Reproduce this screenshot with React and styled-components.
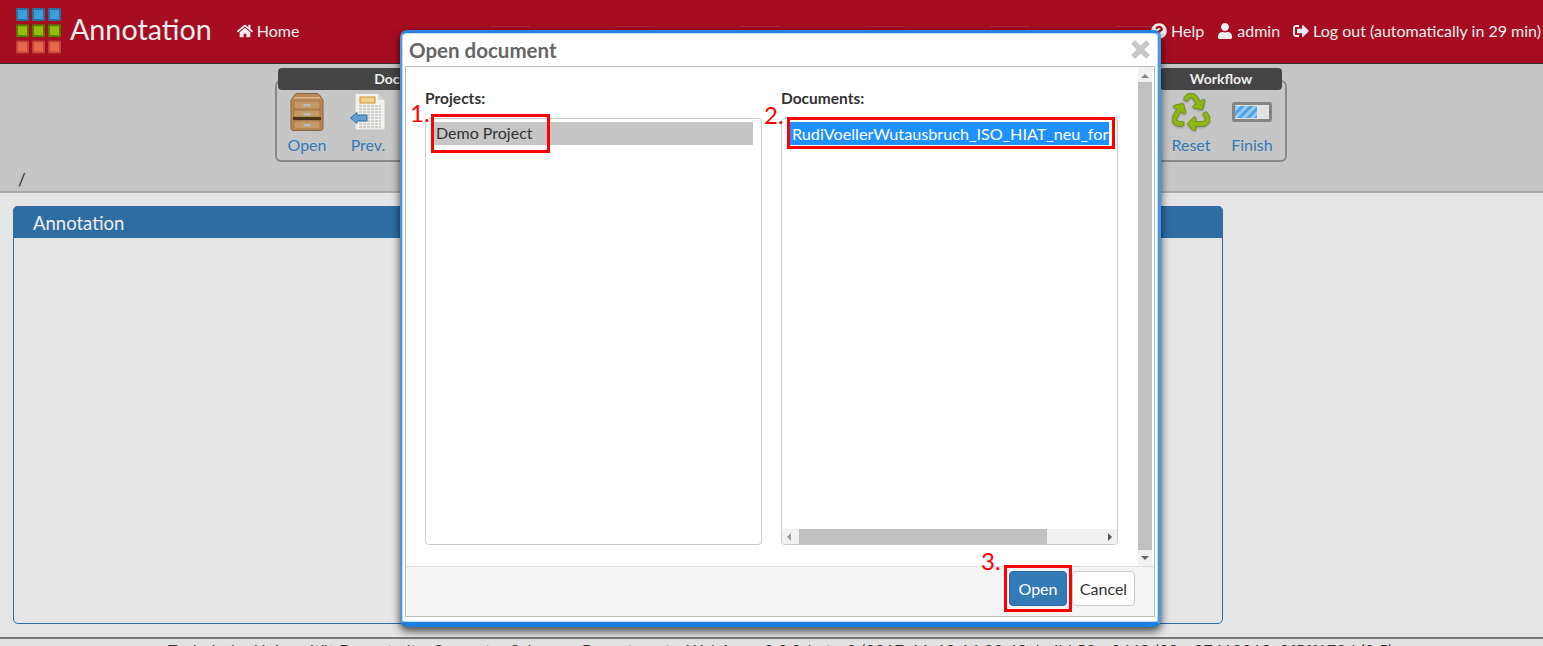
import styled, { createGlobalStyle } from 'styled-components';
import { FaHome, FaQuestionCircle, FaUser, FaSignOutAlt, FaRecycle } from 'react-icons/fa';

const GlobalStyle = createGlobalStyle`
  html, body {
    margin: 0;
    height: 646px;
    overflow: hidden;
    background: #e5e5e5;
    font-family: Lato, "Open Sans", sans-serif;
    color: #333;
  }
  * { box-sizing: border-box; }
`;

const Page = styled.div`
  display: flex;
  flex-direction: column;
  height: 646px;
  overflow: hidden;
  position: relative;
`;

const Header = styled.header`
  position: relative;
  flex: 0 0 64px;
  display: flex;
  align-items: center;
  padding: 0 0 2px 15px;
  background: #a60d20;
  border-bottom: 1px solid #333;
  color: #eee;
  white-space: nowrap;

  &::after {
    content: '';
    position: absolute;
    left: 490px;
    top: 26px;
    width: 665px;
    height: 1px;
    background: repeating-linear-gradient(
      90deg,
      rgba(255, 255, 255, 0.12) 0 40px,
      transparent 40px 125px
    );
  }
`;

const Title = styled.h1`
  margin: 0 25px 4px 9px;
  font-size: 28.7px;
  font-weight: 400;
  color: #eee;
`;

const NavLink = styled.span`
  display: inline-flex;
  align-items: center;
  gap: 4px;
  font-size: 16px;
  margin-right: ${(p) => p.$gap || 0}px;
  svg { font-size: 16px; }
`;

const RightNav = styled.nav`
  margin-left: auto;
  margin-right: 2px;
  display: flex;
`;

const Toolbar = styled.section`
  flex: 0 0 129px;
  background: #c6c6c6;
  border-bottom: 2px solid #aaa;
  display: flex;
  flex-direction: column;
`;

const Ribbon = styled.div`
  display: flex;
  justify-content: space-between;
  width: 1012px;
  margin: 4px 0 0 275px;
`;

const Group = styled.div`
  display: flex;
  flex-direction: column;
  width: ${(p) => p.$width}px;
`;

const GroupLabel = styled.div`
  position: relative;
  height: 22px;
  margin: 0 5px -10px 3px;
  background: #444;
  border-radius: 4px;
  color: #eee;
  font-size: 14px;
  font-weight: 700;
  line-height: 22px;
  text-align: center;
`;

const GroupBody = styled.div`
  height: 82px;
  display: flex;
  padding: 10px 0 0 ${(p) => p.$pad}px;
  border: 2px solid #888;
  border-radius: 6px;
  gap: 3px;
`;

const ToolButton = styled.div`
  width: 58px;
  display: flex;
  flex-direction: column;
  align-items: center;
  color: #337ab7;
  font-size: 16px;
`;

const ToolIcon = styled.div`
  height: 40px;
  margin-bottom: 3px;
  display: flex;
  align-items: center;
  justify-content: center;
`;

const RecycleGlyph = styled(FaRecycle)`
  font-size: 38px;
  color: #8fb60c;
  stroke: #557a06;
  stroke-width: 8px;
  filter: drop-shadow(0 1px 1px rgba(0, 0, 0, 0.3));
`;

const Breadcrumb = styled.div`
  margin: 8px 0 0 18px;
  font-size: 17px;
  line-height: 20px;
`;

const Main = styled.main`
  flex: 0 0 444px;
  padding: 13px 13px;
`;

const Panel = styled.section`
  width: 1210px;
  height: 418px;
  border: 1px solid #2e6da4;
  border-radius: 5px;
`;

const PanelHeading = styled.h2`
  margin: -1px -1px 0;
  height: 32px;
  padding-left: 20px;
  background: #2e6da4;
  border-radius: 5px 5px 0 0;
  color: #eee;
  font-size: 18.5px;
  font-weight: 400;
  line-height: 34px;
`;

const Footer = styled.footer`
  border-top: 2px solid #777;
  background: #e2e2e2;
  color: #333;
  font-size: 16px;
  letter-spacing: 0.4px;
  line-height: 18px;
  white-space: nowrap;
  padding: 2px 0 0 18px;
  display: flex;
  justify-content: center;
`;

const Modal = styled.div`
  position: absolute;
  left: 400px;
  top: 30px;
  width: 761px;
  height: 597px;
  display: flex;
  flex-direction: column;
  background: #fff;
  border-style: solid;
  border-width: 3px 3px 5px 2px;
  border-color: #2783dd #4a97e0 #1f7fdc #4a97e0;
  border-radius: 7px;
  box-shadow: 0 4px 8px rgba(0, 0, 0, 0.7), inset 0 0 0 1px #bcdcf7;
  padding: 0 3px 5px;
`;

const ModalHead = styled.div`
  flex: 0 0 33px;
  display: flex;
  align-items: center;
  justify-content: space-between;
  padding: 0 4px 0 4px;
`;

const ModalTitle = styled.h3`
  margin: 0;
  color: #666;
  font-size: 20.5px;
  font-weight: 700;
`;

const ModalFrame = styled.div`
  flex: 1;
  min-height: 0;
  display: flex;
  flex-direction: column;
  border: 1px solid #bbb;
`;

const ModalScroller = styled.div`
  flex: 1;
  min-height: 0;
  display: flex;
`;

const ModalBody = styled.div`
  flex: 1;
  display: grid;
  grid-template-columns: 337px 337px;
  column-gap: 19px;
  padding: 23px 0 0 19px;
`;

const Field = styled.div`
  display: flex;
  flex-direction: column;
`;

const FieldLabel = styled.label`
  height: 28px;
  font-size: 15.5px;
  line-height: 17px;
  font-weight: 700;
  color: #333;
`;

const ListBox = styled.div`
  position: relative;
  height: 427px;
  padding: 3px 8px;
  border: 1px solid #ccc;
  border-radius: 4px;
  background: #fff;
  overflow: hidden;
`;

const Option = styled.div`
  height: 23px;
  padding-left: 2px;
  background: ${(p) => (p.$active ? '#1e90ff' : '#c6c6c6')};
  color: ${(p) => (p.$active ? '#fff' : '#333')};
  font-size: ${(p) => (p.$active ? 16.2 : 16)}px;
  line-height: ${(p) => (p.$active ? 24 : 22)}px;
  white-space: nowrap;
  overflow: hidden;
`;

const HScroll = styled.div`
  position: absolute;
  left: 0;
  right: 0;
  bottom: 0;
  height: 15px;
  display: flex;
  align-items: center;
  justify-content: space-between;
  padding: 0 5px;
  background: #f1f1f1;
`;

const HThumb = styled.div`
  position: absolute;
  left: 17px;
  width: 248px;
  top: 0;
  bottom: 0;
  background: #c1c1c1;
`;

const VScroll = styled.div`
  flex: 0 0 14px;
  margin: 0 2px 0 0;
  display: flex;
  flex-direction: column;
  align-items: center;
  justify-content: space-between;
  background: #f1f1f1;
  padding: 7px 0 6px;
`;

const VThumb = styled.div`
  flex: 1;
  width: 100%;
  margin: 4px 0 6px;
  background: #c1c1c1;
`;

const Arrow = styled.span`
  width: 0;
  height: 0;
  border-style: solid;
  border-color: transparent;
  ${(p) =>
    p.$dir === 'up' && 'border-width: 0 4px 4px; border-bottom-color: #888;'}
  ${(p) =>
    p.$dir === 'down' && 'border-width: 4px 4px 0; border-top-color: #666;'}
  ${(p) =>
    p.$dir === 'left' && 'border-width: 4px 4px 4px 0; border-right-color: #999;'}
  ${(p) =>
    p.$dir === 'right' && 'border-width: 4px 0 4px 4px; border-left-color: #555;'}
`;

const ModalFooter = styled.div`
  flex: 0 0 50px;
  display: flex;
  justify-content: flex-end;
  gap: 5px;
  padding: 4px 19px 0 0;
  background: #f4f4f4;
  border-top: 1px solid #ddd;
`;

const Btn = styled.button`
  height: 35px;
  width: ${(p) => p.$width}px;
  padding: 0;
  border: 1px solid ${(p) => (p.$primary ? '#2e6da4' : '#ccc')};
  border-radius: 4px;
  background: ${(p) => (p.$primary ? '#337ab7' : '#fff')};
  color: ${(p) => (p.$primary ? '#fff' : '#333')};
  font-family: inherit;
  font-size: 16px;
`;

const Callout = styled.div`
  position: absolute;
  left: ${(p) => p.$x}px;
  top: ${(p) => p.$y}px;
  width: ${(p) => p.$w}px;
  height: ${(p) => p.$h}px;
  border: 3px solid #f00;
`;

const CalloutNumber = styled.span`
  position: absolute;
  left: ${(p) => p.$x}px;
  top: ${(p) => p.$y}px;
  color: #f00;
  font-size: 24px;
  line-height: 28px;
`;

const LogoMark = () => {
  const rows = [
    ['#3f9cdb', '#2a6f9f'],
    ['#95bb0b', '#527a05'],
    ['#e8674d', '#c4433a'],
  ];
  return (
    <svg width="46" height="46" viewBox="0 0 46 46">
      {rows.map(([fill, edge], r) =>
        [0, 1, 2].map((c) => (
          <rect
            key={`${r}-${c}`}
            x={2 + c * 16}
            y={1 + r * 16.3}
            width="11"
            height="11"
            rx="0.5"
            fill={fill}
            stroke={edge}
            strokeWidth="2"
          />
        )),
      )}
    </svg>
  );
};

const CabinetIcon = () => (
  <svg width="34" height="38" viewBox="0 0 34 38">
    <path d="M2 6 Q4 1 7 0.5 H27 Q30 1 32 6 L33 7 V36 L31 37.5 H3 L1 36 V7 Z" fill="#b98a56" stroke="#8a6336" />
    <rect x="4" y="4" width="26" height="1.5" fill="#dcbb8c" />
    <rect x="4" y="8" width="26" height="8" fill="#c69a66" stroke="#94703f" strokeWidth="0.7" />
    <rect x="4" y="17" width="26" height="7" fill="#c69a66" stroke="#94703f" strokeWidth="0.7" />
    <rect x="3" y="24" width="28" height="3" fill="#4b3318" />
    <rect x="4" y="28" width="26" height="8" fill="#c69a66" stroke="#94703f" strokeWidth="0.7" />
    <rect x="13.5" y="11" width="7" height="2.5" fill="#b9b9b9" />
    <rect x="13.5" y="20" width="7" height="2.5" fill="#b9b9b9" />
    <rect x="13.5" y="31" width="7" height="2.5" fill="#b9b9b9" />
  </svg>
);

const PrevIcon = () => (
  <svg width="36" height="38" viewBox="0 0 36 38">
    <path d="M5 0.5 H28 L35 7 V37 H5 Z" fill="#f1f1ee" stroke="#c2c2c2" />
    <path d="M28 0.5 V7 H35 Z" fill="#d4d4d4" />
    <rect x="10" y="4" width="15" height="6" fill="#f3d08a" stroke="#d88f2c" />
    {[13, 16, 19, 22, 25, 28, 31, 34].map((y) => (
      <path key={y} d="M9 0 H31" transform={`translate(0 ${y})`} stroke="#aaa" strokeDasharray="3 1" />
    ))}
    <path d="M0.5 25 L7 19.5 V22 H17 V28 H7 V30.5 Z" fill="#5f9fd3" stroke="#33709f" />
  </svg>
);

const FinishIcon = () => (
  <svg width="40" height="20" viewBox="0 0 40 20">
    <defs>
      <pattern id="stripe" width="6" height="6" patternUnits="userSpaceOnUse" patternTransform="rotate(45)">
        <rect width="6" height="6" fill="#4fa3e3" />
        <rect width="3" height="6" fill="#9ccaef" />
      </pattern>
    </defs>
    <rect x="1.5" y="1.5" width="37" height="17" rx="1" fill="#e3e3e3" stroke="#858585" strokeWidth="3" />
    <rect x="3" y="4" width="22" height="12" fill="url(#stripe)" />
  </svg>
);

export default function App() {
  return (
    <Page>
      <GlobalStyle />
      <Header>
        <LogoMark />
        <Title>Annotation</Title>
        <NavLink>
          <FaHome />
          Home
        </NavLink>
        <RightNav>
          <NavLink $gap={13}>
            <FaQuestionCircle />
            Help
          </NavLink>
          <NavLink $gap={13}>
            <FaUser />
            admin
          </NavLink>
          <NavLink>
            <FaSignOutAlt />
            Log out (automatically in 29 min)
          </NavLink>
        </RightNav>
      </Header>

      <Toolbar>
        <Ribbon>
          <Group $width={266}>
            <GroupLabel>Document</GroupLabel>
            <GroupBody $pad={1}>
              <ToolButton>
                <ToolIcon>
                  <CabinetIcon />
                </ToolIcon>
                Open
              </ToolButton>
              <ToolButton>
                <ToolIcon>
                  <PrevIcon />
                </ToolIcon>
                Prev.
              </ToolButton>
            </GroupBody>
          </Group>
          <Group $width={130}>
            <GroupLabel>Workflow</GroupLabel>
            <GroupBody $pad={3}>
              <ToolButton>
                <ToolIcon>
                  <RecycleGlyph />
                </ToolIcon>
                Reset
              </ToolButton>
              <ToolButton>
                <ToolIcon>
                  <FinishIcon />
                </ToolIcon>
                Finish
              </ToolButton>
            </GroupBody>
          </Group>
        </Ribbon>
        <Breadcrumb>/</Breadcrumb>
      </Toolbar>

      <Main>
        <Panel>
          <PanelHeading>Annotation</PanelHeading>
        </Panel>
      </Main>

      <Footer>
        Technische Universität Darmstadt - Computer Science - Department - WebAnno 3.3.0-beta-8 (2017-11-10 14:33:49, build 53 - 3469 (30 - 07410919, 8f5ff173d (3.5)
      </Footer>

      <Modal>
        <ModalHead>
          <ModalTitle>Open document</ModalTitle>
          <svg width="21" height="21" viewBox="0 0 21 21">
            <path d="M3 3 L18 18 M18 3 L3 18" stroke="#c8c8c8" strokeWidth="5.5" />
          </svg>
        </ModalHead>
        <ModalFrame>
          <ModalScroller>
            <ModalBody>
              <Field>
                <FieldLabel>Projects:</FieldLabel>
                <ListBox>
                  <Option>Demo Project</Option>
                </ListBox>
              </Field>
              <Field>
                <FieldLabel>Documents:</FieldLabel>
                <ListBox>
                  <Option $active>RudiVoellerWutausbruch_ISO_HIAT_neu_for</Option>
                  <HScroll>
                    <HThumb />
                    <Arrow $dir="left" />
                    <Arrow $dir="right" />
                  </HScroll>
                </ListBox>
              </Field>
            </ModalBody>
            <VScroll>
              <Arrow $dir="up" />
              <VThumb />
              <Arrow $dir="down" />
            </VScroll>
          </ModalScroller>
          <ModalFooter>
            <Btn $primary $width={58}>Open</Btn>
            <Btn $width={63}>Cancel</Btn>
          </ModalFooter>
        </ModalFrame>
      </Modal>

      <Callout $x={431} $y={114} $w={119} $h={39} />
      <Callout $x={787} $y={117} $w={328} $h={32} />
      <Callout $x={1004} $y={565} $w={68} $h={47} />
      <CalloutNumber $x={410} $y={99}>1.</CalloutNumber>
      <CalloutNumber $x={764} $y={101}>2.</CalloutNumber>
      <CalloutNumber $x={981} $y={547}>3.</CalloutNumber>
    </Page>
  );
}
